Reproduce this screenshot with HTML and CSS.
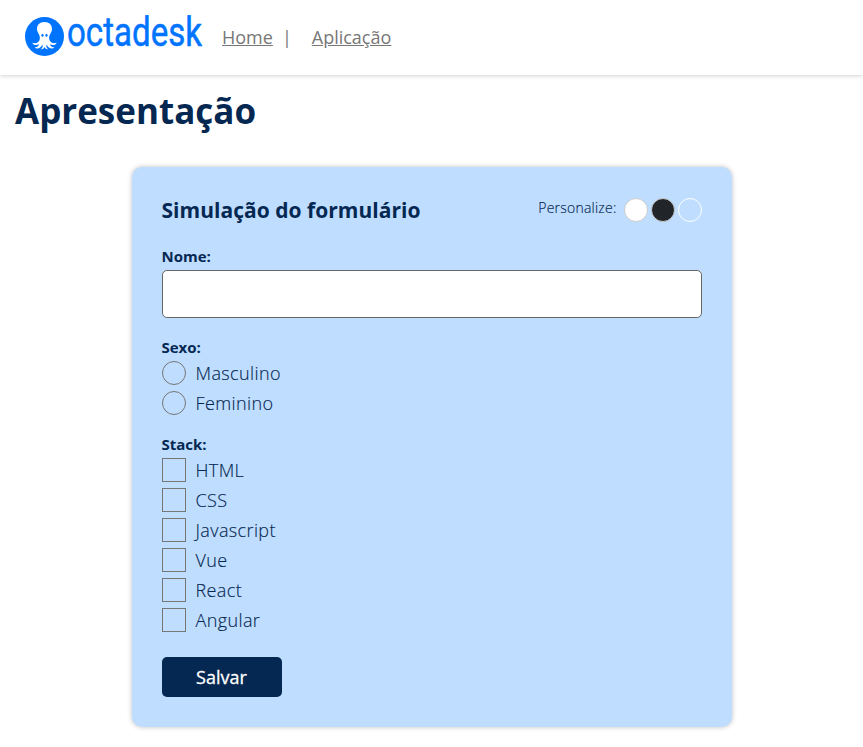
FILE: index.html
```html
<!DOCTYPE html>
<html lang="pt-BR">
<head>
<meta charset="utf-8">
<title>Octadesk</title>
<link rel="stylesheet" href="styles.css">
</head>
<body>
<header class="topbar">
  <svg class="logo" width="180" height="60" viewBox="0 -7 180 60" role="img" aria-label="octadesk">
    <circle cx="19.5" cy="23.500" r="19.5" fill="#0074ff"/>
    <path fill="#fff" d="M19.500 9C14.500 9 12 12 12 16C12 20 15.500 21.500 14.800 26C14.200 29.500 11 31 7.300 29.700C8.300 32 11 32.700 14 31.300C13.500 33.500 11.500 34.500 9.500 34.600C12.500 37 16.500 34.500 17.300 31.500C18.200 33.800 17.500 35.300 15.500 36.200C18 36.500 19.200 35.200 19.500 33.700C19.800 35.200 21 36.500 23.500 36.200C21.500 35.300 20.800 33.800 21.700 31.500C22.500 34.500 26.500 37 29.500 34.600C27.500 34.500 25.500 33.500 25 31.300C28 32.700 30.700 32 31.700 29.700C28 31 24.800 29.500 24.200 26C23.500 21.500 27 20 27 16C27 12 24.500 9 19.500 9Z"/>
    <ellipse cx="17.500" cy="22.200" rx="1.100" ry="1.500" fill="#0074ff"/>
    <ellipse cx="21.500" cy="22.200" rx="1.100" ry="1.500" fill="#0074ff"/>
    <text class="wordmark" transform="translate(42 33.3) scale(.86 1)" textLength="157" lengthAdjust="spacingAndGlyphs">octadesk</text>
  </svg>
  <nav class="nav"><a href="#">Home</a><span class="divider">|</span><a href="#">Aplicação</a></nav>
</header>
<main>
  <h1>Apresentação</h1>
  <form class="card">
    <div class="card-head">
      <h2>Simulação do formulário</h2>
      <div class="themes"><span class="themes-label">Personalize:</span><i class="swatch white"></i><i class="swatch dark"></i><i class="swatch blue"></i></div>
    </div>
    <label class="label" for="nome">Nome:</label>
    <input class="field" id="nome" type="text">
    <div class="label">Sexo:</div>
    <div class="options">
      <label><input class="radio" type="radio" name="sexo"><span>Masculino</span></label>
      <label><input class="radio" type="radio" name="sexo"><span>Feminino</span></label>
    </div>
    <div class="label">Stack:</div>
    <div class="options">
      <label><input type="checkbox"><span>HTML</span></label>
      <label><input type="checkbox"><span>CSS</span></label>
      <label><input type="checkbox"><span>Javascript</span></label>
      <label><input type="checkbox"><span>Vue</span></label>
      <label><input type="checkbox"><span>React</span></label>
      <label><input type="checkbox"><span>Angular</span></label>
    </div>
    <button class="save" type="button">Salvar</button>
  </form>
</main>
</body>
</html>
```
FILE: styles.css
```css
* { box-sizing: border-box; }
body {
  margin: 0;
  background: #fff;
  color: #052852;
  font-family: "Open Sans", "Noto Sans", sans-serif;
  font-weight: 300;
}
.topbar {
  display: flex;
  align-items: center;
  height: 75px;
  padding: 0 25px 3px;
  box-shadow: 0 0 5px rgba(0, 0, 0, .25);
}
.logo { display: block; flex: none; overflow: visible; }
.wordmark {
  font-family: Roboto, sans-serif;
  font-size: 40px;
  font-weight: 400;
  fill: #0074ff;
  stroke: #0074ff;
  stroke-width: .5;
  stroke-linejoin: round;
}
.nav {
  display: flex;
  margin: 1px 0 0 17px;
  font-size: 18px;
  line-height: 24px;
  font-weight: 400;
  color: #777;
}
.nav a { color: inherit; text-underline-offset: 1px; }
.divider { margin: 0 20px 0 9px; }
h1 {
  margin: 12px 15px 0;
  font-size: 35px;
  line-height: 48px;
  font-weight: 700;
}
.card {
  width: 600px;
  height: 560px;
  margin: 32px auto 20px;
  padding: 30px;
  border-radius: 10px;
  background: #bfddff;
  box-shadow: 0 0 5px rgba(0, 0, 0, .25);
}
.card-head { display: flex; justify-content: space-between; height: 49px; }
h2 { margin: 0; font-size: 21px; line-height: 26px; font-weight: 700; letter-spacing: .03px; }
.themes { display: flex; align-items: center; height: 26px; gap: 3px; }
.themes-label { margin: -4px 4px 0 0; font-size: 14px; line-height: 20px; letter-spacing: .22px; -webkit-text-stroke: .15px #052852; }
.swatch { width: 24px; height: 24px; border: 1px solid #ccc; border-radius: 50%; }
.white { background: #fff; }
.dark { background: #212529; }
.blue { background: #bfddff; border-color: #fff; }
.label { display: block; font-size: 15px; line-height: 20px; font-weight: 700; }
.field {
  display: block;
  width: 100%;
  height: 48px;
  margin: 4px 0 19px;
  border: 1px solid #666;
  border-radius: 5px;
  background: #fff;
}
.options { display: grid; gap: 6px; margin: 4px 0 19px; }
.options label { display: flex; align-items: center; height: 24px; font-size: 18px; line-height: 24px; letter-spacing: .38px; -webkit-text-stroke: .15px #052852; }
.options input {
  appearance: none;
  width: 24px;
  height: 24px;
  margin: 0 10px 0 0;
  border: 1px solid #767676;
}
.options .radio { border-radius: 50%; }
.save {
  display: block;
  width: 120px;
  height: 40px;
  margin-top: 25px;
  padding: 0;
  border: 0;
  border-radius: 5px;
  background: #052852;
  color: #fff;
  font: 500 18px/40px "Open Sans", sans-serif;
  -webkit-text-stroke: .3px #fff;
}
```
